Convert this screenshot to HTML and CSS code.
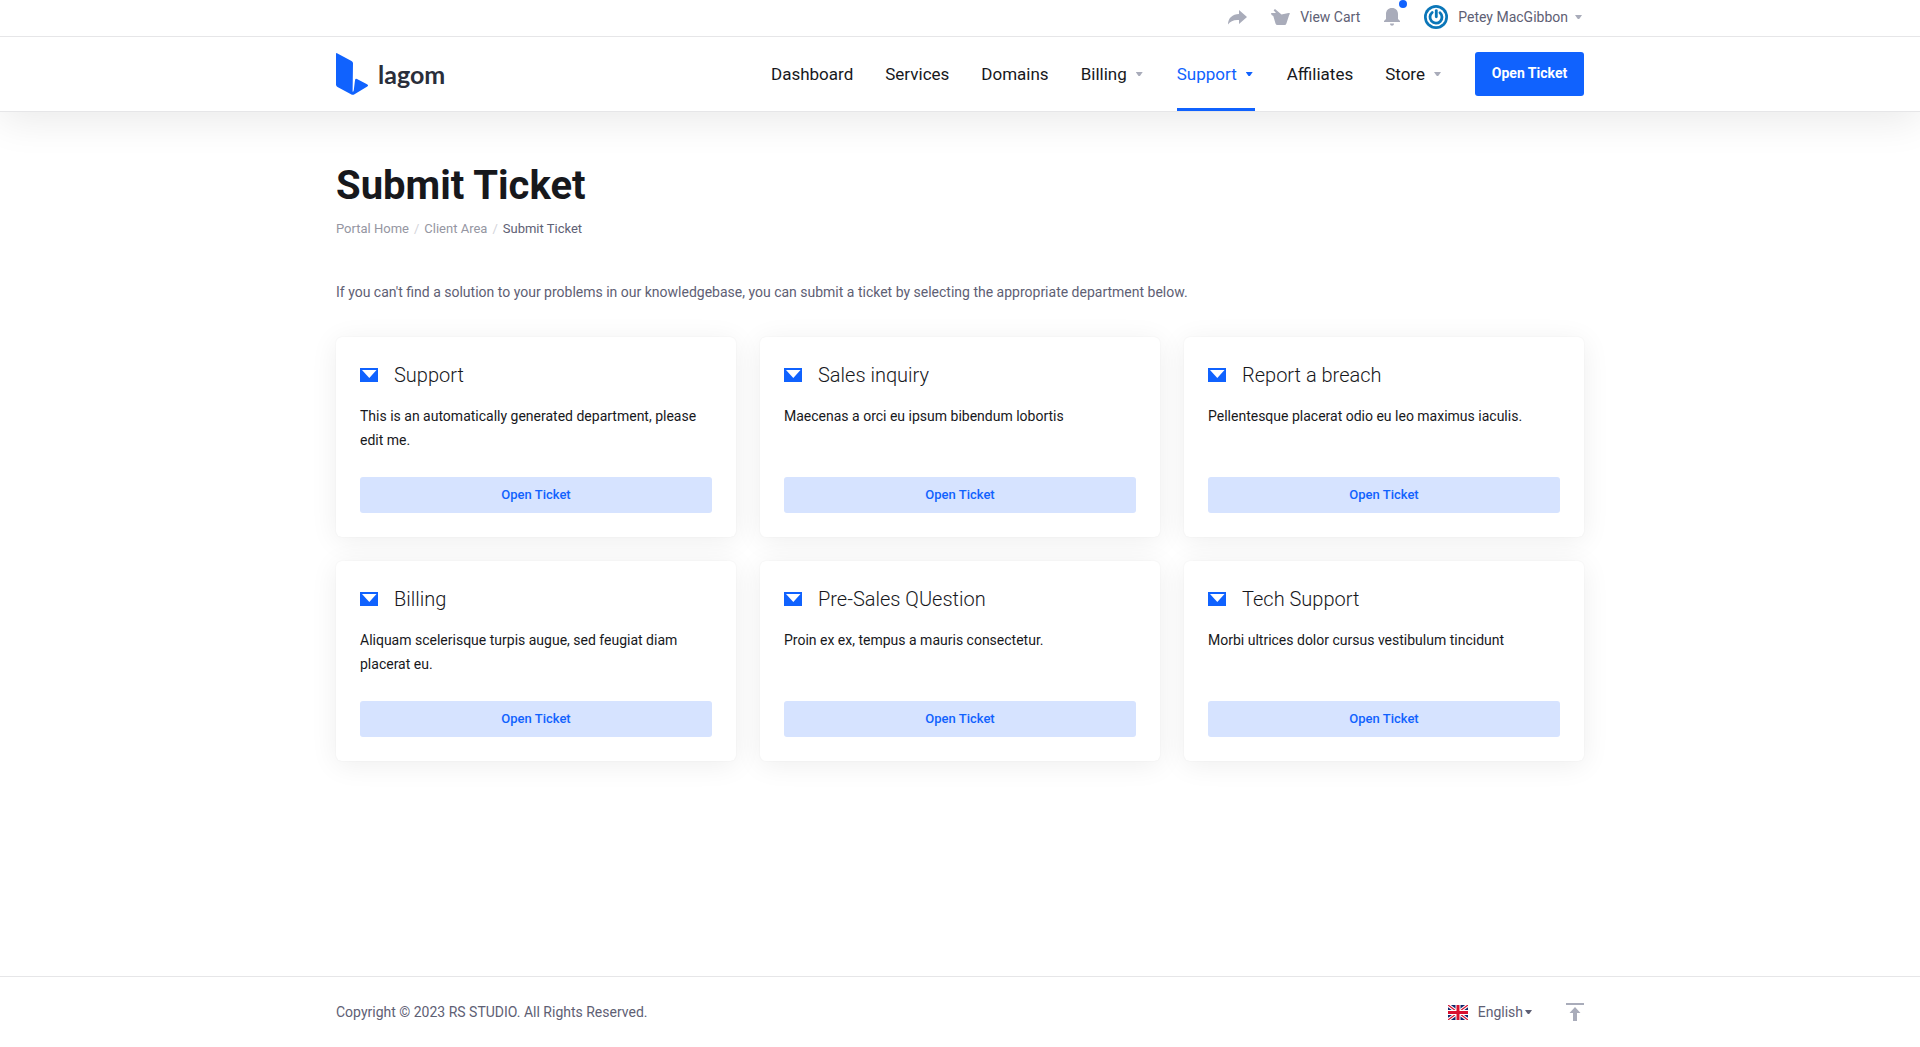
FILE: index.html
```
<!DOCTYPE html>
<html lang="en">
<head>
<meta charset="utf-8">
<meta name="viewport" content="width=device-width, initial-scale=1">
<title>Submit Ticket - lagom</title>
<link rel="stylesheet" href="styles.css">
</head>
<body>
<svg width="0" height="0" class="sprite" aria-hidden="true">
  <symbol id="mail" viewBox="0 0 18 14"><path fill="#1062fe" fill-rule="evenodd" d="M0 0h18v14H0zM2 2l7.300 8L16.500 2z"/></symbol>
</svg>
<div class="topbar">
  <div class="container topbar-inner">
    <button class="top-item" aria-label="Return to admin">
      <svg width="19" height="15" viewBox="0 0 19 15"><path fill="#a9acba" d="M11 0l8 7-8 7v-4C6 9.500 2.500 11 0 14.500 0 8 4.500 4.200 11 4z"/></svg>
    </button>
    <a class="top-item" href="#">
      <svg width="19" height="16" viewBox="0 0 19 16"><path fill="#a9acba" d="M0 4h5L2.600 1.200 4 0l6.500 5.500L17.500 4 19 4.300l-1 2.200-2.600 8Q15 16 13.500 16h-7Q5 16 4.500 14.500L2.300 7Q0 6.500 0 4z"/></svg>
      <span>View Cart</span>
    </a>
    <button class="top-item bell" aria-label="Notifications">
      <svg width="16" height="18" viewBox="0 0 16 18"><path fill="#a9acba" d="M8 0c3.800 0 6 2.600 6 6v5l2 2v1H0v-1l2-2V6c0-3.400 2.200-6 6-6zM6 15.500h4c0 3-4 3-4 0z"/></svg>
      <span class="dot"></span>
    </button>
    <button class="top-item account">
      <svg width="24" height="24" viewBox="0 0 24 24"><circle cx="12" cy="12" r="12" fill="#0b76b8"/><circle cx="12" cy="12" r="9.300" fill="#fff"/><path fill="none" stroke="#0b76b8" stroke-width="2.800" stroke-linecap="round" d="M8.200 7.500A6 6 0 1 0 16 7.700"/><path fill="none" stroke="#0b76b8" stroke-width="2.800" stroke-linecap="round" d="M12.300 5.600v6.200"/></svg>
      <span>Petey MacGibbon</span>
      <i class="caret"></i>
    </button>
  </div>
</div>
<header class="header">
  <div class="container header-inner">
    <a class="logo" href="#">
      <svg width="32" height="42" viewBox="0 0 32 42"><path fill="#1062fe" d="M0 1Q0-.4 1.500.400L15.500 8Q17 8.800 17 10.200L16.600 38.500Q17.400 39.300 17.800 37L19 27.200Q19.300 25.200 21 26L31 31.200Q33 32.400 31.300 33.600L18.500 41.300Q16.800 42.300 15 41.300L1.500 34Q0 33 0 31.500z"/></svg>
      <span>lagom</span>
    </a>
    <nav class="nav">
      <a href="#">Dashboard</a>
      <a href="#">Services</a>
      <a href="#">Domains</a>
      <a href="#">Billing <i class="caret"></i></a>
      <a href="#" class="active">Support <i class="caret"></i></a>
      <a href="#">Affiliates</a>
      <a href="#">Store <i class="caret"></i></a>
      <button class="btn-primary">Open Ticket</button>
    </nav>
  </div>
</header>
<main class="container main">
  <h1>Submit Ticket</h1>
  <nav class="breadcrumb" aria-label="Breadcrumb">
    <a href="#">Portal Home</a><span class="sep">/</span><a href="#">Client Area</a><span class="sep">/</span><span>Submit Ticket</span>
  </nav>
  <p class="lead">If you can't find a solution to your problems in our knowledgebase, you can submit a ticket by selecting the appropriate department below.</p>
  <div class="grid">
    <section class="card">
      <h2><svg width="18" height="14"><use href="#mail"/></svg>Support</h2>
      <p>This is an automatically generated department, please edit me.</p>
      <button>Open Ticket</button>
    </section>
    <section class="card">
      <h2><svg width="18" height="14"><use href="#mail"/></svg>Sales inquiry</h2>
      <p>Maecenas a orci eu ipsum bibendum lobortis</p>
      <button>Open Ticket</button>
    </section>
    <section class="card">
      <h2><svg width="18" height="14"><use href="#mail"/></svg>Report a breach</h2>
      <p>Pellentesque placerat odio eu leo maximus iaculis.</p>
      <button>Open Ticket</button>
    </section>
    <section class="card">
      <h2><svg width="18" height="14"><use href="#mail"/></svg>Billing</h2>
      <p>Aliquam scelerisque turpis augue, sed feugiat diam placerat eu.</p>
      <button>Open Ticket</button>
    </section>
    <section class="card">
      <h2><svg width="18" height="14"><use href="#mail"/></svg>Pre-Sales QUestion</h2>
      <p>Proin ex ex, tempus a mauris consectetur.</p>
      <button>Open Ticket</button>
    </section>
    <section class="card">
      <h2><svg width="18" height="14"><use href="#mail"/></svg>Tech Support</h2>
      <p>Morbi ultrices dolor cursus vestibulum tincidunt</p>
      <button>Open Ticket</button>
    </section>
  </div>
</main>
<footer class="footer">
  <div class="container footer-inner">
    <span>Copyright © 2023 RS STUDIO. All Rights Reserved.</span>
    <div class="footer-tools">
      <button class="lang">
        <svg width="20" height="15" viewBox="0 0 20 15"><rect width="20" height="15" rx="1" fill="#10276c"/><path d="M0 0l20 15M20 0L0 15" stroke="#fff" stroke-width="3.400"/><path d="M0 0l20 15M20 0L0 15" stroke="#d8102f" stroke-width="1.200"/><path d="M10 0v15M0 7.500h20" stroke="#fff" stroke-width="5"/><path d="M10 0v15M0 7.500h20" stroke="#d8102f" stroke-width="3"/></svg>
        <span>English</span><i class="caret"></i>
      </button>
      <a href="#" class="to-top" aria-label="Back to top">
        <svg width="18" height="18" viewBox="0 0 18 18"><path fill="#a9acba" d="M0 0h18v2H0zM9 4l5.500 6H11v8H7v-8H3.500z"/></svg>
      </a>
    </div>
  </div>
</footer>
</body>
</html>
```
FILE: styles.css
```
* { box-sizing: border-box; }
body {
  margin: 0;
  min-height: 100vh;
  display: flex;
  flex-direction: column;
  font: 14px/24px Roboto, "Liberation Sans", sans-serif;
  color: #5e6074;
  background: #fff;
}
a { color: inherit; text-decoration: none; }
button { font: inherit; color: inherit; border: 0; padding: 0; background: none; cursor: pointer; }
svg { display: block; flex: none; }
.sprite { position: absolute; }
.container { width: 100%; max-width: 1296px; margin: 0 auto; padding: 0 24px; }
.caret {
  width: 7px;
  height: 4px;
  background: #a9acba;
  clip-path: polygon(0 0, 100% 0, 60% 100%, 40% 100%);
}

.topbar { position: relative; z-index: 1; background: #fff; border-bottom: 1px solid #e6e6e8; }
.topbar-inner { display: flex; justify-content: flex-end; align-items: center; gap: 24px; height: 36px; padding-bottom: 2px; }
.top-item { display: flex; align-items: center; gap: 10px; height: 34px; position: relative; }
.account .caret { margin: 0 2px 0 -3px; }
.dot { position: absolute; top: 0; right: -7px; width: 8px; height: 8px; border-radius: 50%; background: #1062fe; }

.header { border-bottom: 1px solid #e6e6e8; box-shadow: 0 8px 40px rgba(0, 0, 0, .09); }
.header-inner { display: flex; justify-content: space-between; align-items: center; height: 74px; }
.logo { display: flex; align-items: center; gap: 10px; font: 700 25px/32px Lato, sans-serif; color: #2a2e3a; }
.nav { display: flex; align-items: center; gap: 32px; height: 100%; font-size: 17px; color: #17181c; }
.nav a { display: flex; align-items: center; gap: 9px; height: 100%; }
.nav .caret { margin-right: 2px; }
.nav .active { color: #1062fe; box-shadow: inset 0 -3px #1062fe; }
.nav .active .caret { background: #1062fe; }
.btn-primary { width: 109px; height: 44px; padding-bottom: 2px; border-radius: 3px; background: #1062fe; color: #fff; font-size: 14px; font-weight: 700; }

.main { flex: 1; padding-top: 48px; padding-bottom: 48px; }
h1 { margin: 0; font-size: 40px; line-height: 52px; font-weight: 700; color: #17181c; }
.breadcrumb { display: flex; gap: 5px; margin-top: 5px; font-size: 13px; line-height: 24px; }
.breadcrumb a { color: #9596a2; }
.sep { color: #d3d4da; }
.lead { margin: 39px 0 33px; }
.grid { display: grid; grid-template-columns: repeat(auto-fit, minmax(320px, 1fr)); gap: 24px; }
.card {
  display: flex;
  flex-direction: column;
  min-height: 200px;
  padding: 24px;
  border-radius: 6px;
  background: #fff;
  box-shadow: 0 0 2px rgba(0, 0, 0, .06), 0 4px 28px rgba(0, 0, 0, .07);
  color: #17181c;
}
.card h2 { display: flex; align-items: center; gap: 16px; margin: 0; font-size: 20px; line-height: 28px; font-weight: 300; }
.card p { flex: 1; margin: 15px 0 16px; }
.card button { height: 36px; border-radius: 3px; background: #d6e3ff; color: #1062fe; font-size: 13px; font-weight: 500; }

.footer { border-top: 1px solid #e6e6e8; }
.footer-inner { display: flex; justify-content: space-between; align-items: center; height: 70px; }
.footer-tools { display: flex; align-items: center; gap: 34px; }
.lang { display: flex; align-items: center; gap: 10px; }
.lang .caret { margin-left: -8px; background: #5e6074; }
```
